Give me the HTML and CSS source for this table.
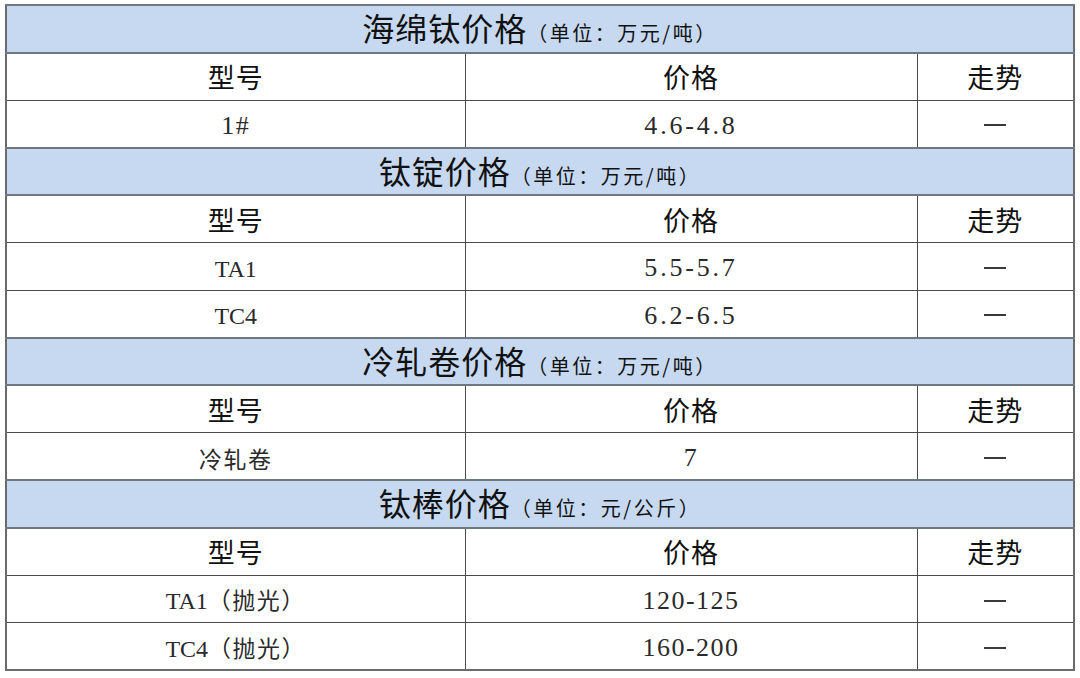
FILE: index.html
```html
<!DOCTYPE html>
<html lang="zh-CN">
<head>
<meta charset="utf-8">
<title>钛价格</title>
<link rel="stylesheet" href="styles.css">
</head>
<body>
<table class="price-table">
  <colgroup>
    <col class="c1"><col class="c2"><col class="c3">
  </colgroup>
  <tbody>
    <tr class="sec"><td colspan="3"><span class="title">海绵钛价格</span><span class="unit">（单位：万元/吨）</span></td></tr>
    <tr class="head"><td>型号</td><td>价格</td><td>走势</td></tr>
    <tr class="data"><td><span class="num">1#</span></td><td><span class="num decimal">4.6-4.8</span></td><td><span class="dash"></span></td></tr>

    <tr class="sec"><td colspan="3"><span class="title">钛锭价格</span><span class="unit">（单位：万元/吨）</span></td></tr>
    <tr class="head"><td>型号</td><td>价格</td><td>走势</td></tr>
    <tr class="data"><td><span class="lat">TA1</span></td><td><span class="num decimal">5.5-5.7</span></td><td><span class="dash"></span></td></tr>
    <tr class="data"><td><span class="lat">TC4</span></td><td><span class="num decimal">6.2-6.5</span></td><td><span class="dash"></span></td></tr>

    <tr class="sec"><td colspan="3"><span class="title">冷轧卷价格</span><span class="unit">（单位：万元/吨）</span></td></tr>
    <tr class="head"><td>型号</td><td>价格</td><td>走势</td></tr>
    <tr class="data"><td><span class="cjk">冷轧卷</span></td><td><span class="num">7</span></td><td><span class="dash"></span></td></tr>

    <tr class="sec"><td colspan="3"><span class="title">钛棒价格</span><span class="unit">（单位：元/公斤）</span></td></tr>
    <tr class="head"><td>型号</td><td>价格</td><td>走势</td></tr>
    <tr class="data"><td><span class="lat">TA1</span><span class="cjk">（抛光）</span></td><td><span class="num">120-125</span></td><td><span class="dash"></span></td></tr>
    <tr class="data"><td><span class="lat">TC4</span><span class="cjk">（抛光）</span></td><td><span class="num">160-200</span></td><td><span class="dash"></span></td></tr>
  </tbody>
</table>
</body>
</html>
```

FILE: styles.css
```css
html, body {
  margin: 0;
  padding: 0;
  background: #ffffff;
}
body {
  padding: 4px 0 0 5px;
  font-family: "Noto Sans CJK SC", "Noto Sans", sans-serif;
  color: #1a1a1a;
}
.price-table {
  border-collapse: collapse;
  table-layout: fixed;
  width: 1068px;
  border: 2px solid #6b6b6b;
}
.c1 { width: 459px; }
.c2 { width: 452px; }
.c3 { width: 157px; }
.price-table td {
  height: 47.5px;
  padding: 0;
  text-align: center;
  vertical-align: middle;
  border: 1px solid #4a4a4a;
  line-height: 1;
  box-sizing: border-box;
  white-space: nowrap;
}
.sec td {
  background: #c6d9f0;
  border-top: 2px solid #6f7782;
  border-bottom: 2px solid #6f7782;
  padding-bottom: 3px;
}
.title {
  font-size: 32px;
  letter-spacing: 1px;
  color: #111;
}
.unit {
  font-size: 20px;
  color: #111;
  letter-spacing: 2.5px;
}
.head td {
  font-size: 27px;
  color: #111;
  letter-spacing: 1px;
}
.data td {
  font-size: 24px;
  color: #2a2a2a;
  padding-top: 3px;
}
.num {
  font-family: "Liberation Serif", "Noto Sans CJK SC", serif;
  font-size: 26px;
  letter-spacing: 1.5px;
  color: #2a2a2a;
}
.num.decimal {
  letter-spacing: 2.8px;
}
.lat {
  font-family: "Liberation Serif", serif;
  font-size: 24px;
  letter-spacing: 0;
  color: #2a2a2a;
}
.cjk {
  font-family: "Noto Sans CJK SC", sans-serif;
  font-size: 23px;
  letter-spacing: 1.5px;
  color: #2a2a2a;
}
.dash {
  display: inline-block;
  width: 22px;
  height: 2px;
  background: #3a3a3a;
  vertical-align: middle;
  margin-bottom: 6px;
}
```
